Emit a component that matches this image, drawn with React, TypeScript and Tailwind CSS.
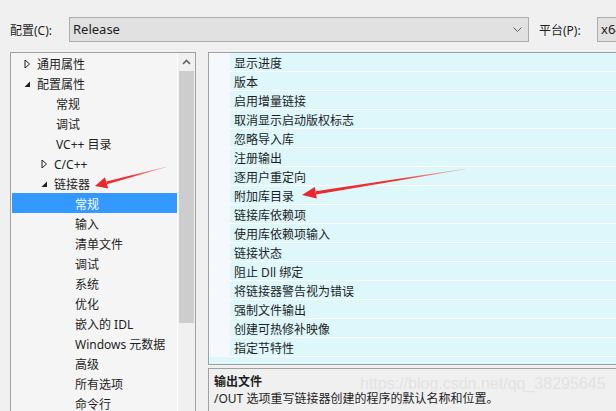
import React from 'react';

type TreeItem = { label: string; level: number; arrow?: 'open' | 'closed'; selected?: boolean };

const tree: TreeItem[] = [
  { label: '通用属性', level: 0, arrow: 'closed' },
  { label: '配置属性', level: 0, arrow: 'open' },
  { label: '常规', level: 1 },
  { label: '调试', level: 1 },
  { label: 'VC++ 目录', level: 1 },
  { label: 'C/C++', level: 1, arrow: 'closed' },
  { label: '链接器', level: 1, arrow: 'open' },
  { label: '常规', level: 2, selected: true },
  { label: '输入', level: 2 },
  { label: '清单文件', level: 2 },
  { label: '调试', level: 2 },
  { label: '系统', level: 2 },
  { label: '优化', level: 2 },
  { label: '嵌入的 IDL', level: 2 },
  { label: 'Windows 元数据', level: 2 },
  { label: '高级', level: 2 },
  { label: '所有选项', level: 2 },
  { label: '命令行', level: 2 },
];

const props = [
  '显示进度',
  '版本',
  '启用增量链接',
  '取消显示启动版权标志',
  '忽略导入库',
  '注册输出',
  '逐用户重定向',
  '附加库目录',
  '链接库依赖项',
  '使用库依赖项输入',
  '链接状态',
  '阻止 Dll 绑定',
  '将链接器警告视为错误',
  '强制文件输出',
  '创建可热修补映像',
  '指定节特性',
];

function Arrow({ kind }: { kind: 'open' | 'closed' }) {
  if (kind === 'closed') {
    return (
      <svg width="7" height="10" viewBox="0 0 7 10" className="shrink-0">
        <path d="M1 1 L5.5 5 L1 9 Z" fill="none" stroke="#1e1e1e" strokeWidth="1" />
      </svg>
    );
  }
  return (
    <svg width="7" height="10" viewBox="0 0 7 10" className="shrink-0">
      <path d="M6 2.5 L6 8 L0.5 8 Z" fill="#1e1e1e" />
    </svg>
  );
}

function TreeRow({ item }: { item: TreeItem }) {
  const arrowLeft = item.level === 0 ? 'pl-[12px]' : 'pl-[29px]';
  const textOnly = item.level === 1 ? 'pl-[44px]' : 'pl-[63px]';
  return (
    <div
      className={`h-[20px] pt-[4px] flex items-center ${item.selected ? 'bg-[#3399ff] text-white' : 'text-[#1e1e1e]'} ${
        item.arrow ? arrowLeft : textOnly
      }`}
    >
      {item.arrow && (
        <span className="w-[13px] flex items-center -mt-[3px]">
          <Arrow kind={item.arrow} />
        </span>
      )}
      <span className="whitespace-nowrap">{item.label}</span>
    </div>
  );
}

export default function App() {
  return (
    <div
      className="relative w-[616px] h-[411px] overflow-hidden bg-[#f0f0f0] text-[12px] leading-none"
      style={{ fontFamily: '"Noto Sans", "Noto Sans CJK SC", sans-serif' }}
    >
      {/* Header */}
      <div className="h-[52px] flex items-start pt-[17px] pl-[10px]">
        <div className="w-[59px] h-[25px] shrink-0 pt-[2px] flex items-center whitespace-nowrap text-[#1e1e1e]">配置(C):</div>
        <div className="w-[460px] h-[25px] shrink-0 flex items-center justify-between border border-[#adadad] bg-[#e1e1e1] pl-[3px] pr-[6px]">
          <span className="text-[13px] text-[#1e1e1e]">Release</span>
          <svg width="9" height="6" viewBox="0 0 9 6">
            <path d="M0.5 0.5 L4.5 4.5 L8.5 0.5" fill="none" stroke="#606060" strokeWidth="1" />
          </svg>
        </div>
        <div className="w-[68px] h-[25px] shrink-0 pt-[2px] flex items-center pl-[10px] whitespace-nowrap text-[#1e1e1e]">平台(P):</div>
        <div className="w-[80px] h-[25px] shrink-0 flex items-center border border-[#adadad] bg-[#e1e1e1] pl-[3px]">
          <span className="text-[13px] text-[#1e1e1e]">x64</span>
        </div>
      </div>

      {/* Body */}
      <div className="flex pl-[10px] gap-[12px]">
        {/* Tree */}
        <div className="w-[186px] h-[380px] shrink-0 flex border border-[#a0a0a0] bg-[#f5f5f5]">
          <div className="flex-1 pl-[1px]">
            {tree.map((t, i) => (
              <TreeRow key={i} item={t} />
            ))}
          </div>
          <div className="w-[18px] border-l border-white bg-[#f0f0f0] flex flex-col">
            <div className="h-[18px] flex items-center justify-center">
              <svg width="9" height="6" viewBox="0 0 9 6">
                <path d="M1 5 L4.5 1.5 L8 5" fill="none" stroke="#606060" strokeWidth="1.6" />
              </svg>
            </div>
            <div className="mx-[1px] h-[252px] bg-[#cdcdcd]" />
          </div>
        </div>

        {/* Right column */}
        <div className="w-[430px] shrink-0 flex flex-col gap-[3px]">
          <div className="h-[313px] border border-[#a0a0a0] bg-[#ddf7fb] overflow-hidden">
            {props.map((p, i) => (
              <div key={i} className="h-[19px] flex">
                <div className="w-[21px] bg-[#f5f8fd]" />
                <div className="flex-1 flex items-center pl-[4px] pt-[4px] border-b border-white text-[#1e1e1e]">{p}</div>
              </div>
            ))}
          </div>
          <div className="h-[60px] border border-[#a0a0a0] bg-[#f0f0f0] pl-[5px] pt-[4px] text-[#1e1e1e]">
            <div className="h-[17px] flex items-center font-bold">输出文件</div>
            <div className="h-[17px] flex items-center">/OUT 选项重写链接器创建的程序的默认名称和位置。</div>
          </div>
        </div>
      </div>

      {/* Watermark */}
      <div
        className="absolute left-[360px] top-[376px] text-[16px] text-[#e0e0e0] whitespace-nowrap pointer-events-none"
        style={{ fontFamily: '"Liberation Sans", Arial, sans-serif', opacity: 0.85 }}
      >
        https://blog.csdn.net/qq_38295645
      </div>

      {/* Red annotation arrows */}
      <svg className="absolute inset-0 pointer-events-none" width="616" height="411" viewBox="0 0 616 411">
        <defs>
          <linearGradient id="g1" x1="166" y1="167" x2="95" y2="186" gradientUnits="userSpaceOnUse">
            <stop offset="0" stopColor="#f25555" stopOpacity="0.35" />
            <stop offset="0.5" stopColor="#ee3333" />
            <stop offset="1" stopColor="#e8282e" />
          </linearGradient>
          <linearGradient id="g2" x1="465" y1="169" x2="302" y2="195" gradientUnits="userSpaceOnUse">
            <stop offset="0" stopColor="#f25555" stopOpacity="0.3" />
            <stop offset="0.4" stopColor="#ee3333" />
            <stop offset="1" stopColor="#e8282e" />
          </linearGradient>
        </defs>
        <polygon points="106.9,184.3 106.3,181.5 165.9,166.7 166.1,167.3" fill="url(#g1)" />
        <polygon points="95,186 108.2,188.6 105.0,177.2" fill="#e8282e" />
        <polygon points="316.0,194.4 315.6,191.2 464.95,168.7 465.05,169.3" fill="url(#g2)" />
        <polygon points="302,195 316.8,198.5 314.8,187.1" fill="#e8282e" />
      </svg>
    </div>
  );
}
